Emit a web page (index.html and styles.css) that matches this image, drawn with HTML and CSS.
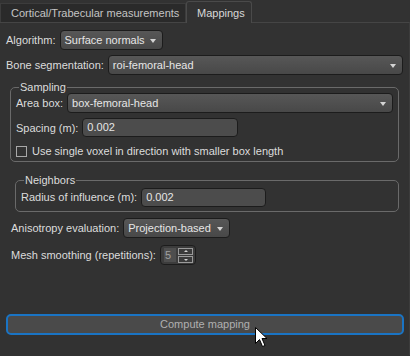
FILE: index.html
```html
<!DOCTYPE html>
<html lang="en">
<head>
  <meta charset="UTF-8" />
  <title>Mappings</title>
  <link rel="stylesheet" href="styles.css">
</head>
<body>
  <div class="tabs">
    <div class="tab">Cortical/Trabecular measurements</div>
    <div class="tab active">Mappings</div>
  </div>

  <div class="panel">
    <div class="row r-algo">
      <span class="label">Algorithm:</span>
      <div class="combo algo">Surface normals <i class="arrow"></i></div>
    </div>
    <div class="row r-bone">
      <span class="label">Bone segmentation:</span>
      <div class="combo grow">roi-femoral-head <i class="arrow"></i></div>
    </div>

    <fieldset class="group sampling">
      <legend>Sampling</legend>
      <div class="row">
        <span class="label">Area box:</span>
        <div class="combo grow">box-femoral-head <i class="arrow"></i></div>
      </div>
      <div class="row r-spacing">
        <span class="label">Spacing (m):</span>
        <div class="field spacing">0.002</div>
      </div>
      <label class="check">
        <span class="box"></span>
        Use single voxel in direction with smaller box length
      </label>
    </fieldset>

    <fieldset class="group neighbors">
      <legend>Neighbors</legend>
      <div class="row">
        <span class="label">Radius of influence (m):</span>
        <div class="field radius">0.002</div>
      </div>
    </fieldset>

    <div class="row r-aniso">
      <span class="label">Anisotropy evaluation:</span>
      <div class="combo aniso">Projection-based <i class="arrow"></i></div>
    </div>
    <div class="row r-mesh">
      <span class="label">Mesh smoothing (repetitions):</span>
      <div class="spin">
        <span class="spin-val">5</span>
        <span class="spin-btns">
          <span class="sb up"></span>
          <span class="sb down"></span>
        </span>
      </div>
    </div>

    <div class="button">Compute mapping</div>
  </div>

  <svg class="cursor" width="13" height="21" viewBox="0 0 13 21">
    <path d="M0.5 0.5 L0.5 16.5 L4.5 12.5 L7.5 19.5 L10 18.5 L7 11.5 L12 11.5 Z" fill="#fff" stroke="#000" stroke-width="1"/>
  </svg>
</body>
</html>
```

FILE: styles.css
```css
body { margin: 0; width: 410px; height: 356px; background: #323232; color: #dcdcdc; font: 11px "Liberation Sans", Arial, sans-serif; overflow: hidden; position: relative; }

.tabs { display: flex; align-items: flex-end; height: 22px; }
.tab { height: 19px; line-height: 19px; padding: 0 10px; background: #2a2a2a; color: #c4c4c4; border: 1px solid #3c3c3c; border-bottom: none; box-sizing: border-box; width: 186px; white-space: nowrap; }
.tab.active { width: 66px; height: 22px; line-height: 22px; background: #323232; color: #d8d8d8; border-color: #4a4a4a; border-radius: 3px 3px 0 0; margin-bottom: -1px; position: relative; z-index: 1; }

.panel { border-top: 1px solid #454545; border-right: 1px solid #3c3c3c; height: 333px; padding: 7px 6px 0 6px; box-sizing: border-box; width: 410px; }

.row { display: flex; align-items: center; gap: 4px; height: 20px; }
.r-bone { margin-top: 5px; }
.label { white-space: nowrap; }

.combo { height: 20px; box-sizing: border-box; border: 1px solid #1c1c1c; border-radius: 4px; background: linear-gradient(#575757, #484848); padding: 0 20px 0 4px; line-height: 18px; position: relative; white-space: nowrap; color: #e6e6e6; }
.combo.grow { flex: 1; }
.combo.algo { padding-right: 17px; }
.combo.aniso { padding-right: 18px; }
.arrow { position: absolute; right: 6px; top: 8px; width: 0; height: 0; border-left: 3.5px solid transparent; border-right: 3.5px solid transparent; border-top: 4px solid #d4d4d4; }

.field { height: 19px; box-sizing: border-box; border: 1px solid #1c1c1c; border-radius: 4px; background: #4c4c4c; padding: 0 4px; line-height: 17px; color: #e6e6e6; }
.field.spacing { width: 156px; }
.field.radius { width: 125px; }

.group { border: 1px solid #6a6a6a; border-radius: 5px; margin: 0; }
.group legend { padding: 0 1px; margin-left: 3px; line-height: 12px; color: #dcdcdc; }
.sampling { margin: 6px 4px 0 4px; padding: 0 5px 4px 5px; }
.r-spacing { margin-top: 5px; height: 19px; }
.check { display: flex; align-items: center; gap: 5px; margin-top: 8px; height: 12px; }
.box { width: 11px; height: 11px; box-sizing: border-box; border: 1px solid #a8a8a8; }

.neighbors { margin: 12px 4px 0 9px; padding: 1px 5px 4px 5px; }
.r-aniso { margin: 6px 0 0 5px; }
.r-mesh { margin: 7px 0 0 5px; }

.spin { display: flex; align-items: center; width: 36px; height: 20px; box-sizing: border-box; border: 1px solid #1c1c1c; border-radius: 4px; background: #3c3c3c; padding: 0 2px 0 3px; gap: 2px; }
.spin-val { background: #4e4e4e; color: #a0a0a0; padding: 0 1px; line-height: 14px; flex: 1; }
.spin-btns { display: flex; flex-direction: column; gap: 1px; }
.sb { width: 15px; height: 7px; box-sizing: border-box; border: 1px solid #9a9a9a; background: #3a3a3a; position: relative; }
.sb::after { content: ""; position: absolute; left: 5px; top: 1px; border-left: 2px solid transparent; border-right: 2px solid transparent; }
.sb.up::after { border-bottom: 2px solid #d0d0d0; }
.sb.down::after { border-top: 2px solid #d0d0d0; top: 2px; }

.button { margin: 49px -1px 0 0; height: 21px; box-sizing: border-box; border: 2px solid #1a74c4; border-radius: 5px; background: #4a4a4a; color: #b0b0b0; text-align: center; line-height: 17px; }

.cursor { position: absolute; left: 255px; top: 327px; }
```
